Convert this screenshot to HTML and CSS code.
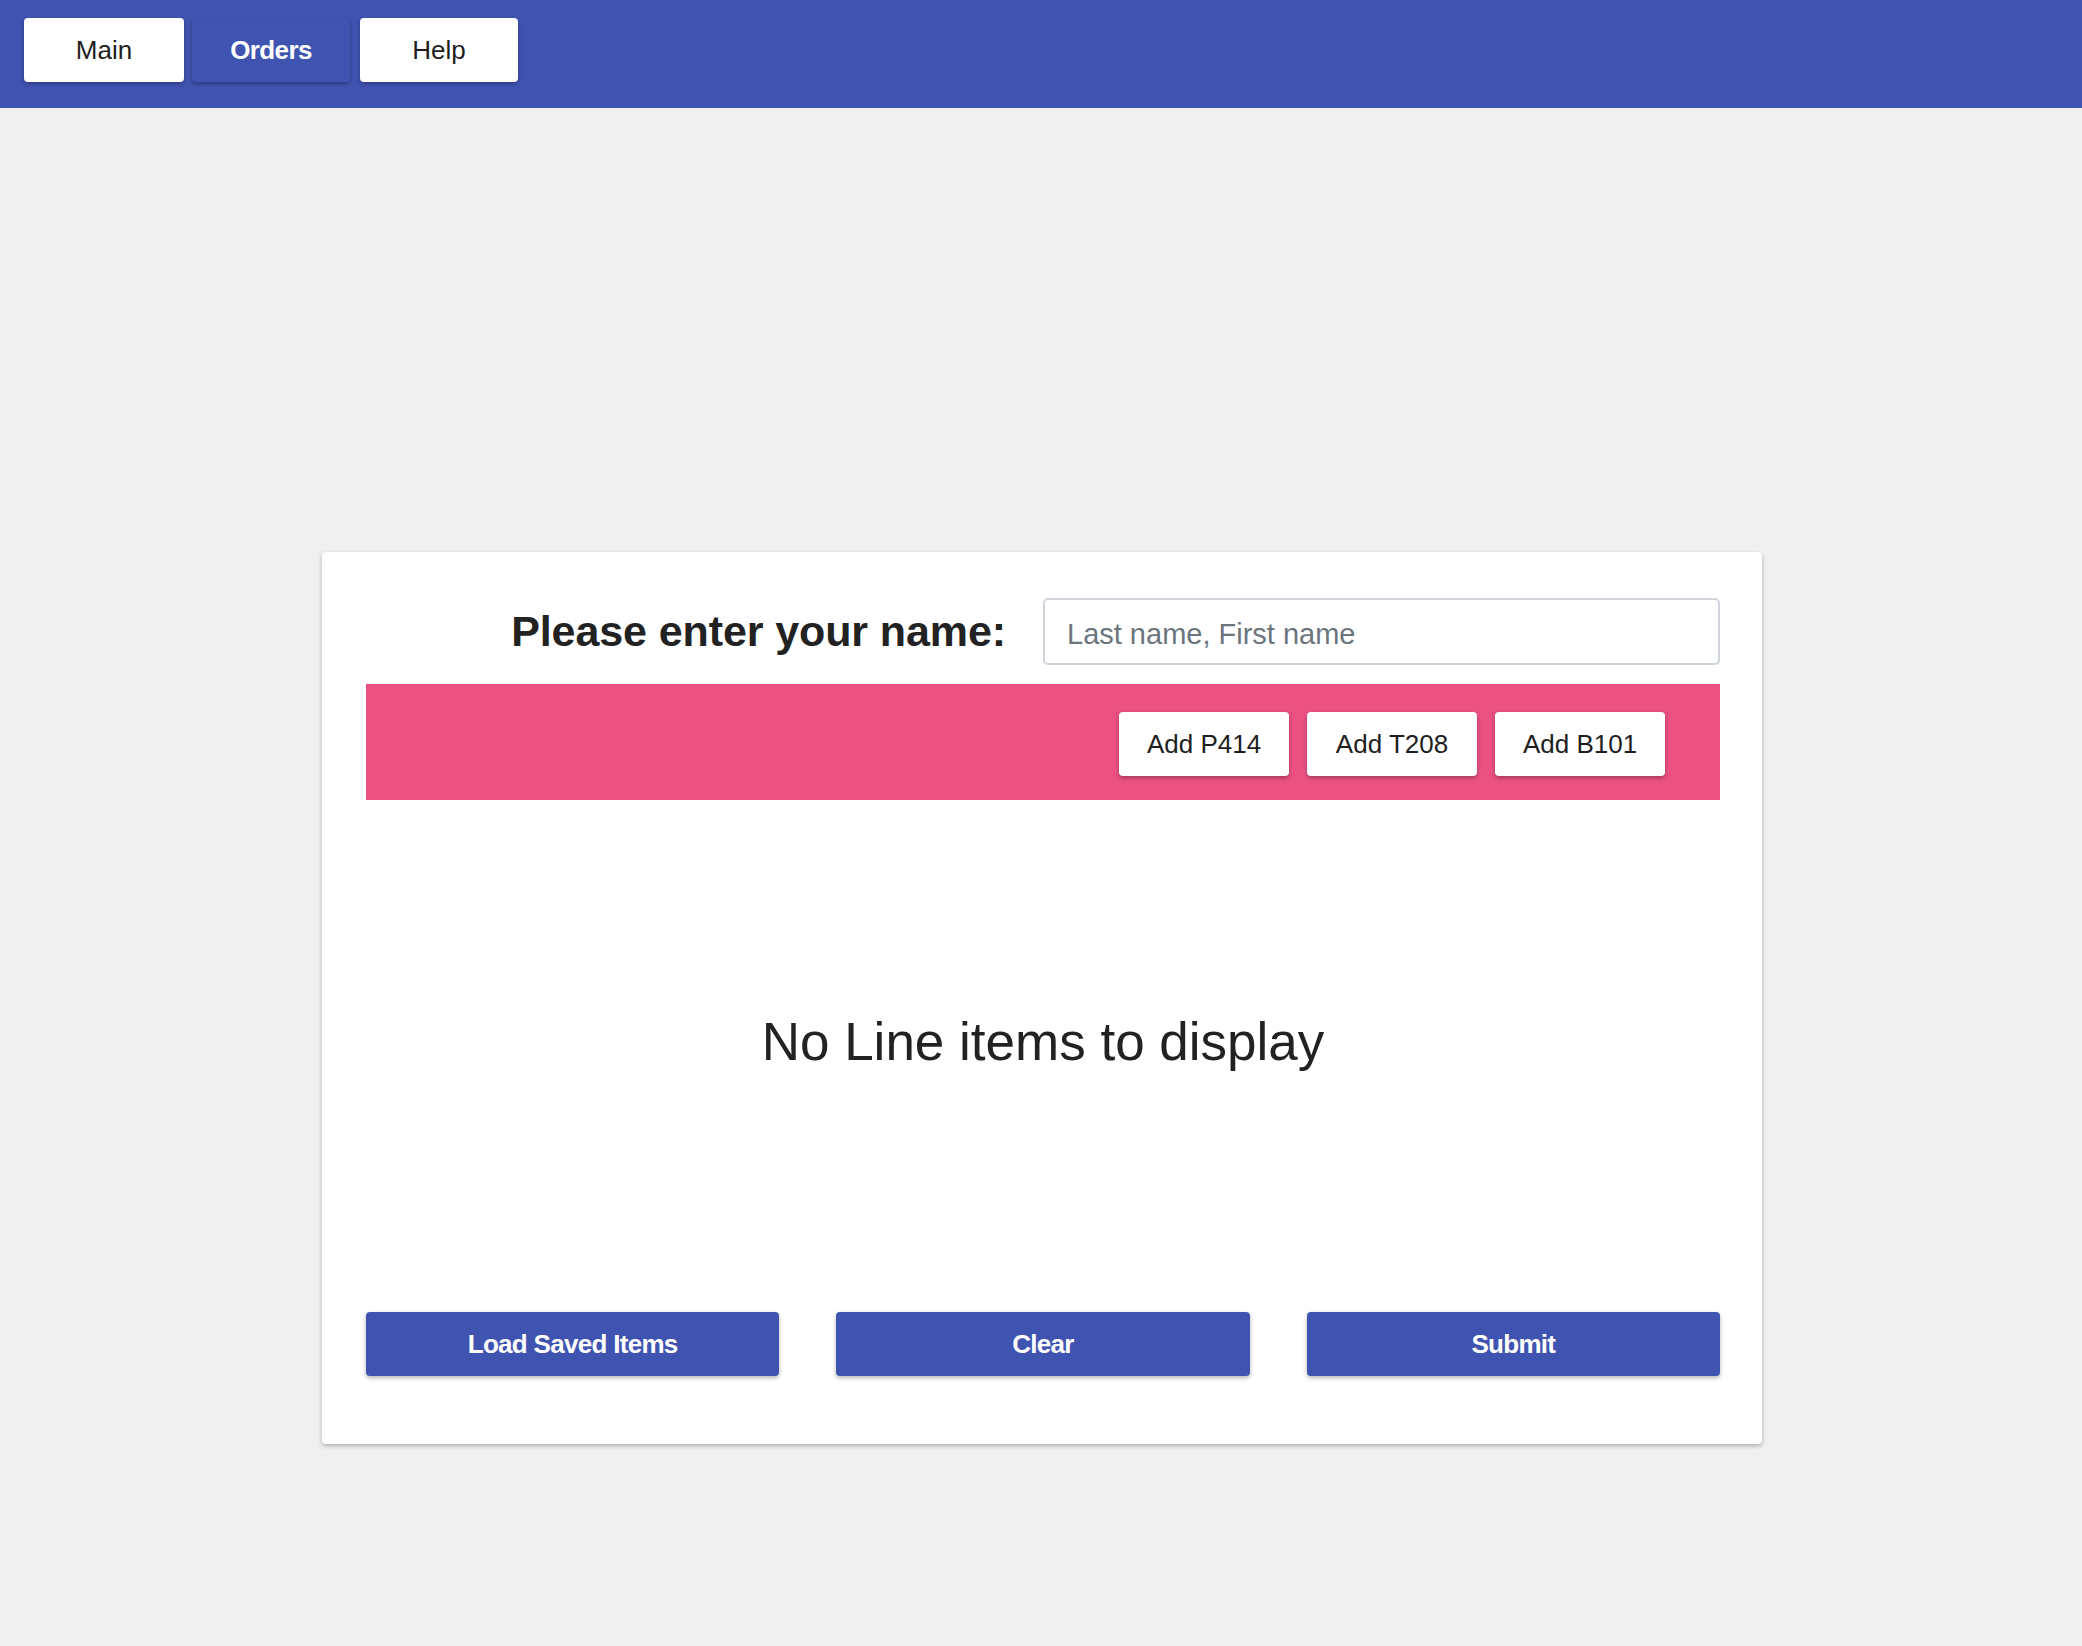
FILE: index.html
```html
<!DOCTYPE html>
<html lang="en">
<head>
<meta charset="utf-8">
<title>Orders</title>
<link rel="stylesheet" href="styles.css">
</head>
<body>
<header class="topbar">
  <nav class="nav">
    <button class="nav-btn nav-btn--light nav-btn--main">Main</button>
    <button class="nav-btn nav-btn--active">Orders</button>
    <button class="nav-btn nav-btn--light nav-btn--help">Help</button>
  </nav>
</header>
<main class="page">
  <section class="card">
    <div class="name-row">
      <label class="name-label" for="name">Please enter your name:</label>
      <input class="name-input" id="name" type="text" placeholder="Last name, First name">
    </div>
    <div class="add-bar">
      <button class="add-btn">Add P414</button>
      <button class="add-btn">Add T208</button>
      <button class="add-btn">Add B101</button>
    </div>
    <div class="empty">No Line items to display</div>
    <div class="actions">
      <button class="action-btn">Load Saved Items</button>
      <button class="action-btn">Clear</button>
      <button class="action-btn">Submit</button>
    </div>
  </section>
</main>
</body>
</html>
```
FILE: styles.css
```css
* { box-sizing: border-box; }

html, body {
  margin: 0;
  padding: 0;
}

body {
  background: #f0f0f0;
  font-family: "Liberation Sans", Arial, sans-serif;
  color: #222;
  min-height: 1646px;
}

button {
  font-family: "Liberation Sans", Arial, sans-serif;
  cursor: pointer;
}

.topbar {
  background: #3f54b1;
  height: 108px;
  padding: 18px 24px;
}

.nav {
  display: flex;
  gap: 8px;
}

.nav-btn {
  height: 64px;
  width: 158px;
  border: none;
  border-radius: 4px;
  font-size: 26px;
  padding: 0;
  box-shadow: 0 2px 4px rgba(0, 0, 0, 0.3);
}

.nav-btn--main { width: 160px; }
.nav-btn--help { margin-left: 2px; }

.nav-btn--light {
  background: #fff;
  color: #1e1e1e;
}

.nav-btn--active {
  background: #3f54b1;
  color: #fff;
  font-weight: 700;
  letter-spacing: -0.6px;
}

.page {
  display: flex;
  justify-content: center;
  padding-top: 444px;
  padding-left: 2px;
}

.card {
  width: 1440px;
  background: #fff;
  border-radius: 4px;
  box-shadow: 0 2px 4px rgba(0, 0, 0, 0.28);
  padding: 46px 42px 68px 44px;
}

.name-row {
  display: grid;
  grid-template-columns: 1fr 677px;
  align-items: center;
  height: 67px;
}

.name-label {
  text-align: right;
  padding-right: 37px;
  font-size: 43px;
  font-weight: 700;
  color: #222;
  letter-spacing: -0.1px;
}

.name-input {
  height: 67px;
  width: 677px;
  border: 2px solid #ced4da;
  border-radius: 5px;
  padding: 5px 22px 0;
  font-family: "Liberation Sans", Arial, sans-serif;
  font-size: 29px;
  color: #495057;
  background: #fff;
  outline: none;
}

.name-input::placeholder {
  color: #6c757d;
  opacity: 1;
}

.add-bar {
  margin-top: 19px;
  background: #eb5281;
  height: 116px;
  display: flex;
  justify-content: flex-end;
  align-items: flex-start;
  gap: 18px;
  padding: 28px 55px 24px 0;
}

.add-btn {
  height: 64px;
  width: 170px;
  background: #fff;
  color: #1e1e1e;
  border: none;
  border-radius: 4px;
  font-size: 26px;
  padding: 0;
  box-shadow: 0 2px 4px rgba(0, 0, 0, 0.3);
}

.empty {
  padding: 212px 0 240px;
  text-align: center;
  font-size: 53px;
  line-height: 60px;
  color: #222;
}

.actions {
  display: grid;
  grid-template-columns: 1fr 1fr 1fr;
  column-gap: 57px;
}

.action-btn {
  height: 64px;
  background: #3f54b1;
  color: #fff;
  border: none;
  border-radius: 4px;
  font-size: 26px;
  font-weight: 700;
  letter-spacing: -0.7px;
  padding: 0;
  box-shadow: 0 2px 4px rgba(0, 0, 0, 0.3);
}
```
